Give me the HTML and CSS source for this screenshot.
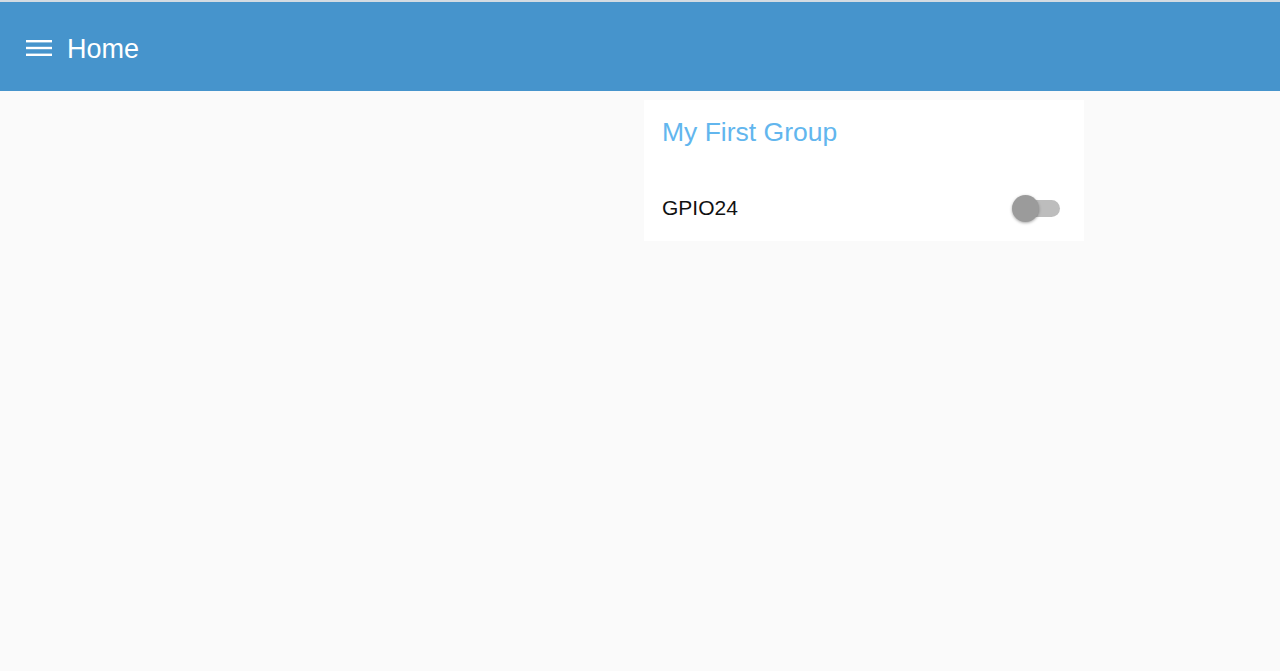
FILE: index.html
```html
<!DOCTYPE html>
<html lang="en">
  <head>
    <meta charset="UTF-8" />
    <meta name="viewport" content="width=device-width, initial-scale=1.0" />
    <title>Home</title>
    <link rel="stylesheet" href="styles.css">
  </head>
  <body>
    <div class="topbar">
      <button class="menu-btn" aria-label="menu">
        <svg width="26" height="18" viewBox="0 0 26 18">
          <rect x="0" y="1" width="26" height="2.4" fill="#fff" />
          <rect x="0" y="7.8" width="26" height="2.4" fill="#fff" />
          <rect x="0" y="14.6" width="26" height="2.4" fill="#fff" />
        </svg>
      </button>
      <h1>Home</h1>
    </div>
    <div class="content">
      <div class="group">
        <h2>My First Group</h2>
        <div class="row">
          <span class="label">GPIO24</span>
          <label class="switch">
            <input type="checkbox" />
            <span class="track"></span>
            <span class="thumb"></span>
          </label>
        </div>
      </div>
    </div>
  </body>
</html>
```

FILE: styles.css
```css
* {
  margin: 0;
  padding: 0;
  box-sizing: border-box;
  font-family: "Liberation Sans", Arial, sans-serif;
}
body {
  background: #fafafa;
  min-height: 100vh;
  border-top: 2px solid #d3dbe2;
}
.topbar {
  height: 89px;
  background: #4694cc;
  display: flex;
  align-items: center;
  padding-left: 26px;
  padding-top: 3px;
  color: #fff;
}
.menu-btn {
  background: none;
  border: none;
  display: flex;
  margin-right: 15px;
}
.topbar h1 {
  font-weight: normal;
  font-size: 27px;
  margin-top: 2px;
}
.content {
  display: flex;
  padding-top: 9px;
  padding-left: 644px;
}
.group {
  width: 440px;
  background: #fff;
  padding: 17px 18px 0 18px;
  height: 141px;
}
.group h2 {
  font-weight: normal;
  font-size: 26.5px;
  color: #62b6ee;
  line-height: 30px;
}
.row {
  display: flex;
  align-items: center;
  justify-content: space-between;
  margin-top: 43px;
  height: 36px;
  padding-right: 6px;
}
.label {
  font-size: 21px;
  color: #111;
}
.switch {
  position: relative;
  width: 50px;
  height: 28px;
  display: block;
  margin-right: -2px;
}
.switch input {
  display: none;
}
.track {
  position: absolute;
  left: 2px;
  top: 6px;
  width: 46px;
  height: 17px;
  border-radius: 9px;
  background: #bdbdbd;
}
.thumb {
  position: absolute;
  left: 0;
  top: 1px;
  width: 27px;
  height: 27px;
  border-radius: 50%;
  background: #9b9b9b;
  box-shadow: 0 1px 3px rgba(0, 0, 0, 0.35);
}
```
